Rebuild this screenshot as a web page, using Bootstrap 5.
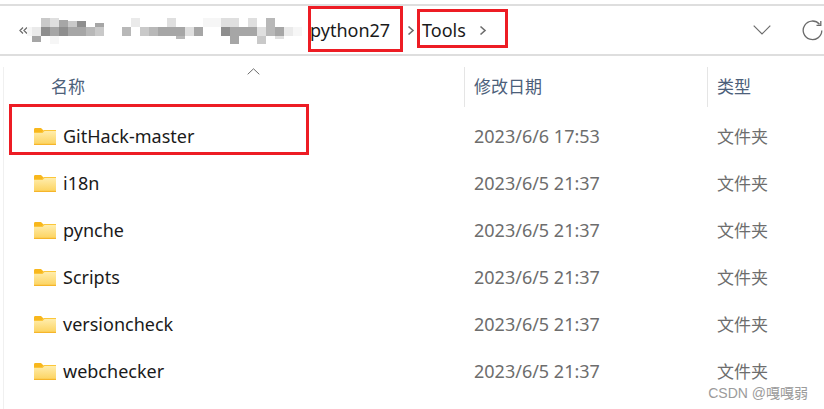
<!DOCTYPE html>
<html lang="zh-CN">
<head>
    <meta charset="UTF-8">
    <title>Tools</title>
    <link href="https://cdn.jsdelivr.net/npm/bootstrap@5.3.3/dist/css/bootstrap.min.css" rel="stylesheet">
    <style>
        html, body { height: 409px; overflow: hidden; background: #fff; }
        body { font-family: "Noto Sans", "Noto Sans CJK SC", sans-serif; font-size: 18px; color: #1a1a1a; position: relative; }
        .addr-bar { margin-top: 4px; height: 52px; border-top: 2px solid #dedede; border-bottom: 2px solid #dedede; }
        .crumb { line-height: 24px; }
        .crumb-py { margin-left: 6px; width: 84px; }
        .crumb-tools { margin-left: 13px; width: 46px; }
        .sep { color: #6d6d6d; }
        .file-pane { margin: 11px 0 0 3px; border-left: 1px solid #f0f0f0; height: 342px; position: relative; }
        .file-head, .file-row { display: grid; grid-template-columns: 460px 243px 1fr; }
        .file-head { height: 40px; color: #4c607a; font-size: 17px; }
        .head-cell { display: flex; align-items: center; padding-left: 47px; }
        .head-cell + .head-cell { border-left: 1px solid #e5e5e5; padding-left: 9px; }
        .file-list { margin-top: 6px; }
        .file-row { height: 47px; align-items: center; }
        .name-cell { display: flex; align-items: center; gap: 7px; padding-left: 30px; }
        .date-cell { padding-left: 10px; color: #6d6d6d; }
        .type-cell { padding-left: 10px; color: #6d6d6d; font-size: 17px; }
        .sort-mark { position: absolute; left: 243px; top: 1px; }
        .red-box { position: absolute; border: 3px solid #ed1c24; }
        .box-py { left: 308px; top: 6px; width: 95px; height: 46px; }
        .box-tools { left: 417px; top: 9px; width: 91px; height: 39px; }
        .box-row { left: 9px; top: 104px; width: 300px; height: 51px; }
        .watermark { position: absolute; right: 16px; top: 382px; font-size: 14px; line-height: 22px; color: #9b9b9b; font-family: "Liberation Sans", "Noto Sans CJK SC", sans-serif; }
    </style>
</head>
<body>

    <!-- Folder icon used by every row -->
    <svg width="0" height="0" class="d-block">
        <defs>
            <linearGradient id="folderFill" x1="0" y1="0" x2="0" y2="1">
                <stop offset="0" stop-color="#ffeeb0"/>
                <stop offset="1" stop-color="#fcd25c"/>
            </linearGradient>
            <symbol id="folder" viewBox="0 0 22 17">
                <path d="M0 1.5C0 .7.5 0 1.3 0H7l2.5 2.5V5H0z" fill="#f8b71c"/>
                <path d="M0 4.500H8l2-2H22V17H0z" fill="url(#folderFill)"/>
                <path d="M0 15.800H22V17H0z" fill="#f6b52a"/>
                <path d="M0 4h8l2-2h12v1H10.500l-2 2H0z" fill="#fbc63a"/>
            </symbol>
        </defs>
    </svg>

    <!-- Address bar -->
    <div class="addr-bar d-flex align-items-center">
        <svg width="8" height="17" viewBox="14 0 8 17" class="flex-shrink-0"><use href="#folder"/></svg>
        <svg width="9" height="9" viewBox="0 0 9 9" class="flex-shrink-0 addr-quote" style="margin-left:11px"><path d="M4 1.500 1 4.500l3 3M8 1.500 5 4.500l3 3" fill="none" stroke="#6d6d6d" stroke-width="1.300"/></svg>
        <!-- blurred part of the path -->
        <svg width="276" height="26" viewBox="28 17 276 26" class="flex-shrink-0" shape-rendering="crispEdges" style="margin-top:2px;margin-left:-1px">
            <g fill="#f6f6f6"><rect x="28" y="26" width="5" height="9"/><rect x="51" y="35" width="9" height="8"/><rect x="294" y="26" width="9" height="9"/><rect x="204" y="17" width="18" height="9"/></g>
            <g fill="#eaeaea"><rect x="33" y="26" width="9" height="9"/><rect x="132" y="17" width="9" height="9"/><rect x="285" y="26" width="9" height="9"/></g>
            <g fill="#8e8e8e"><rect x="42" y="26" width="9" height="9"/><rect x="60" y="26" width="9" height="9"/><rect x="78" y="20" width="9" height="6"/><rect x="222" y="26" width="9" height="9"/></g>
            <g fill="#a6a6a6"><rect x="51" y="26" width="9" height="9"/><rect x="69" y="26" width="18" height="9"/><rect x="60" y="19" width="9" height="7"/><rect x="96" y="22" width="9" height="4"/><rect x="33" y="35" width="9" height="6"/><rect x="159" y="26" width="18" height="9"/><rect x="177" y="26" width="9" height="9"/><rect x="195" y="26" width="9" height="9"/><rect x="231" y="26" width="18" height="9"/><rect x="231" y="35" width="9" height="8"/><rect x="249" y="26" width="9" height="9"/><rect x="276" y="26" width="9" height="9"/></g>
            <g fill="#b8b8b8"><rect x="87" y="26" width="9" height="9"/><rect x="123" y="26" width="9" height="9"/><rect x="150" y="26" width="9" height="9"/><rect x="267" y="26" width="9" height="9"/><rect x="267" y="17" width="9" height="9"/><rect x="177" y="35" width="9" height="3"/></g>
            <g fill="#c9c9c9"><rect x="96" y="26" width="9" height="9"/><rect x="42" y="17" width="9" height="9"/><rect x="69" y="20" width="9" height="6"/><rect x="141" y="26" width="9" height="9"/><rect x="258" y="35" width="9" height="8"/></g>
            <g fill="#dfdfdf"><rect x="51" y="17" width="9" height="9"/><rect x="168" y="17" width="9" height="9"/><rect x="186" y="26" width="9" height="9"/><rect x="222" y="17" width="18" height="9"/><rect x="249" y="17" width="9" height="9"/><rect x="258" y="26" width="9" height="9"/><rect x="276" y="35" width="9" height="3"/></g>
        </svg>
        <span class="crumb crumb-py" style="margin-left:7px">python27</span>
        <svg width="8" height="11" viewBox="0 0 8 11" class="flex-shrink-0" style="margin-left:13px"><path d="M1.500 1.500 6 5.500l-4.500 4" fill="none" stroke="#6d6d6d" stroke-width="1.600"/></svg>
        <span class="crumb crumb-tools" style="margin-left:7px">Tools</span>
        <svg width="8" height="11" viewBox="0 0 8 11" class="flex-shrink-0" style="margin-left:11px"><path d="M1.500 1.500 6 5.500l-4.500 4" fill="none" stroke="#6d6d6d" stroke-width="1.600"/></svg>
        <svg width="18" height="10" viewBox="0 0 18 10" class="flex-shrink-0 ms-auto"><path d="M.7.700 9 9l8.300-8.300" fill="none" stroke="#6b6b6b" stroke-width="1.200"/></svg>
        <svg width="21" height="21" viewBox="0 0 21 21" class="flex-shrink-0" style="margin-left:31px;margin-right:1px"><path d="M17.500 4.200A9.300 9.300 0 1 0 19.800 10.500M18.800 1v4.300h-4.300" fill="none" stroke="#6b6b6b" stroke-width="1.300"/></svg>
    </div>

    <!-- Details view -->
    <div class="file-pane">
        <svg class="sort-mark" width="13" height="7" viewBox="0 0 13 7"><path d="M.7 6.300 6.500.8l5.800 5.500" fill="none" stroke="#6b6b6b" stroke-width="1"/></svg>
        <div class="file-head">
            <div class="head-cell">名称</div>
            <div class="head-cell">修改日期</div>
            <div class="head-cell">类型</div>
        </div>
        <div class="file-list">
            <div class="file-row">
                <div class="name-cell"><svg width="22" height="17"><use href="#folder"/></svg>GitHack-master</div>
                <div class="date-cell">2023/6/6 17:53</div>
                <div class="type-cell">文件夹</div>
            </div>
            <div class="file-row">
                <div class="name-cell"><svg width="22" height="17"><use href="#folder"/></svg>i18n</div>
                <div class="date-cell">2023/6/5 21:37</div>
                <div class="type-cell">文件夹</div>
            </div>
            <div class="file-row">
                <div class="name-cell"><svg width="22" height="17"><use href="#folder"/></svg>pynche</div>
                <div class="date-cell">2023/6/5 21:37</div>
                <div class="type-cell">文件夹</div>
            </div>
            <div class="file-row">
                <div class="name-cell"><svg width="22" height="17"><use href="#folder"/></svg>Scripts</div>
                <div class="date-cell">2023/6/5 21:37</div>
                <div class="type-cell">文件夹</div>
            </div>
            <div class="file-row">
                <div class="name-cell"><svg width="22" height="17"><use href="#folder"/></svg>versioncheck</div>
                <div class="date-cell">2023/6/5 21:37</div>
                <div class="type-cell">文件夹</div>
            </div>
            <div class="file-row">
                <div class="name-cell"><svg width="22" height="17"><use href="#folder"/></svg>webchecker</div>
                <div class="date-cell">2023/6/5 21:37</div>
                <div class="type-cell">文件夹</div>
            </div>
        </div>
    </div>

    <!-- Red annotation boxes drawn over the screenshot -->
    <div class="red-box box-py"></div>
    <div class="red-box box-tools"></div>
    <div class="red-box box-row"></div>
    <div class="watermark">CSDN @嘎嘎弱</div>

    <script src="https://cdn.jsdelivr.net/npm/bootstrap@5.3.3/dist/js/bootstrap.bundle.min.js"></script>
</body>
</html>
